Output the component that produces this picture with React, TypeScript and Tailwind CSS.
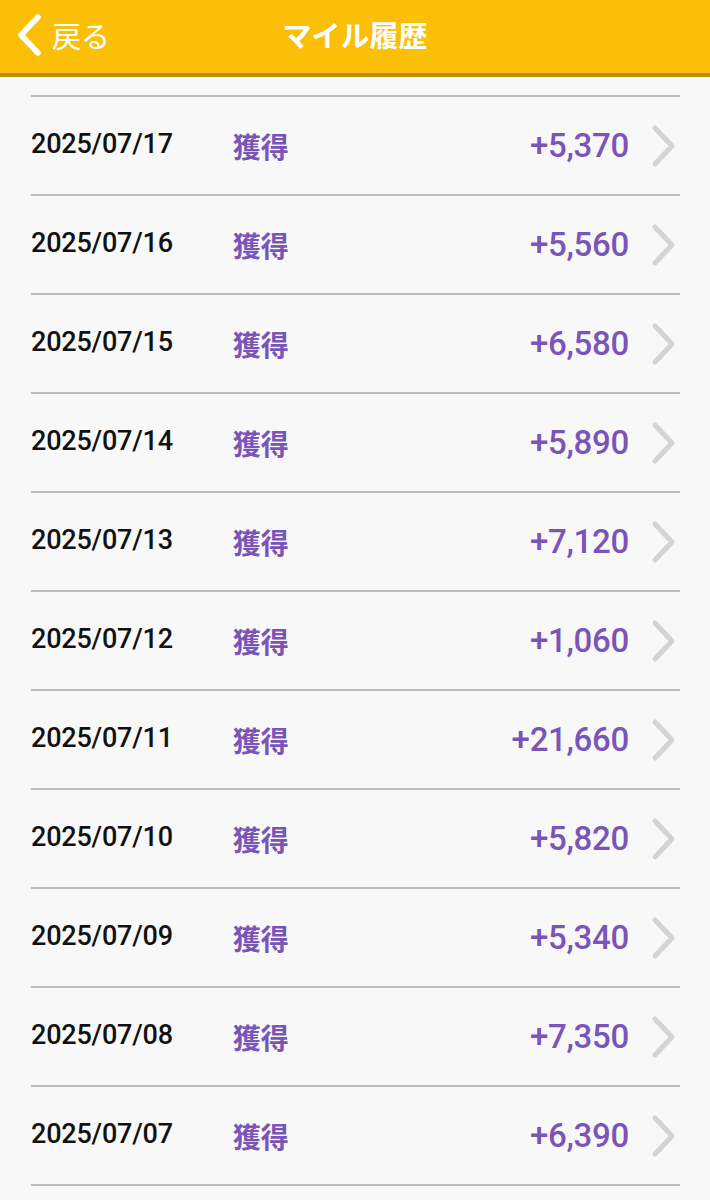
import React from "react";

const rows = [
  ["2025/07/17", "+5,370"],
  ["2025/07/16", "+5,560"],
  ["2025/07/15", "+6,580"],
  ["2025/07/14", "+5,890"],
  ["2025/07/13", "+7,120"],
  ["2025/07/12", "+1,060"],
  ["2025/07/11", "+21,660"],
  ["2025/07/10", "+5,820"],
  ["2025/07/09", "+5,340"],
  ["2025/07/08", "+7,350"],
  ["2025/07/07", "+6,390"],
];

export default function App() {
  return (
    <div className="w-[710px] h-[1200px] overflow-hidden bg-[#f8f8f8] [font-family:Roboto,'Noto_Sans_CJK_JP',sans-serif]">
      <header className="relative h-[77px] bg-[#fcbf08] border-b-[4px] border-[#c08a0a] flex items-center justify-center">
        <div className="absolute left-[14px] top-[14px] flex items-center">
          <svg width="30" height="42" viewBox="0 0 30 42">
            <path d="M24 3 L7 21 L24 39" fill="none" stroke="#ffffff" strokeWidth="5.5" strokeLinecap="round" strokeLinejoin="round" />
          </svg>
          <span className="ml-[8px] text-white text-[29px] leading-none [font-family:'Noto_Sans_CJK_JP',sans-serif] font-normal">戻る</span>
        </div>
        <h1 className="text-white text-[29px] font-bold leading-none -mt-[4px] [font-family:'Noto_Sans_CJK_JP',sans-serif]">マイル履歴</h1>
      </header>
      <div className="pl-[31px] pr-[30px] pt-[18px]">
        <div className="border-t-2 border-[#bdbdbd]">
          {rows.map(([d, a]) => (
            <div key={d} className="h-[99px] border-b-2 border-[#bdbdbd] flex items-center">
              <span className="text-[27px] font-medium text-[#111] -mt-[3px] tracking-[-0.2px]">{d}</span>
              <span className="ml-[60px] text-[28px] font-bold text-[#7a55b8] leading-none [font-family:'Noto_Sans_CJK_JP',sans-serif]">獲得</span>
              <span className="flex-1" />
              <span className="text-[33px] font-medium text-[#7a55b8] tracking-[-0.3px]">{a}</span>
              <svg className="ml-[22px] mr-[3px]" width="26" height="44" viewBox="0 0 26 44">
                <path d="M4 4 L21 22 L4 40" fill="none" stroke="#d4d4d4" strokeWidth="5" strokeLinecap="round" strokeLinejoin="round" />
              </svg>
            </div>
          ))}
        </div>
      </div>
    </div>
  );
}
